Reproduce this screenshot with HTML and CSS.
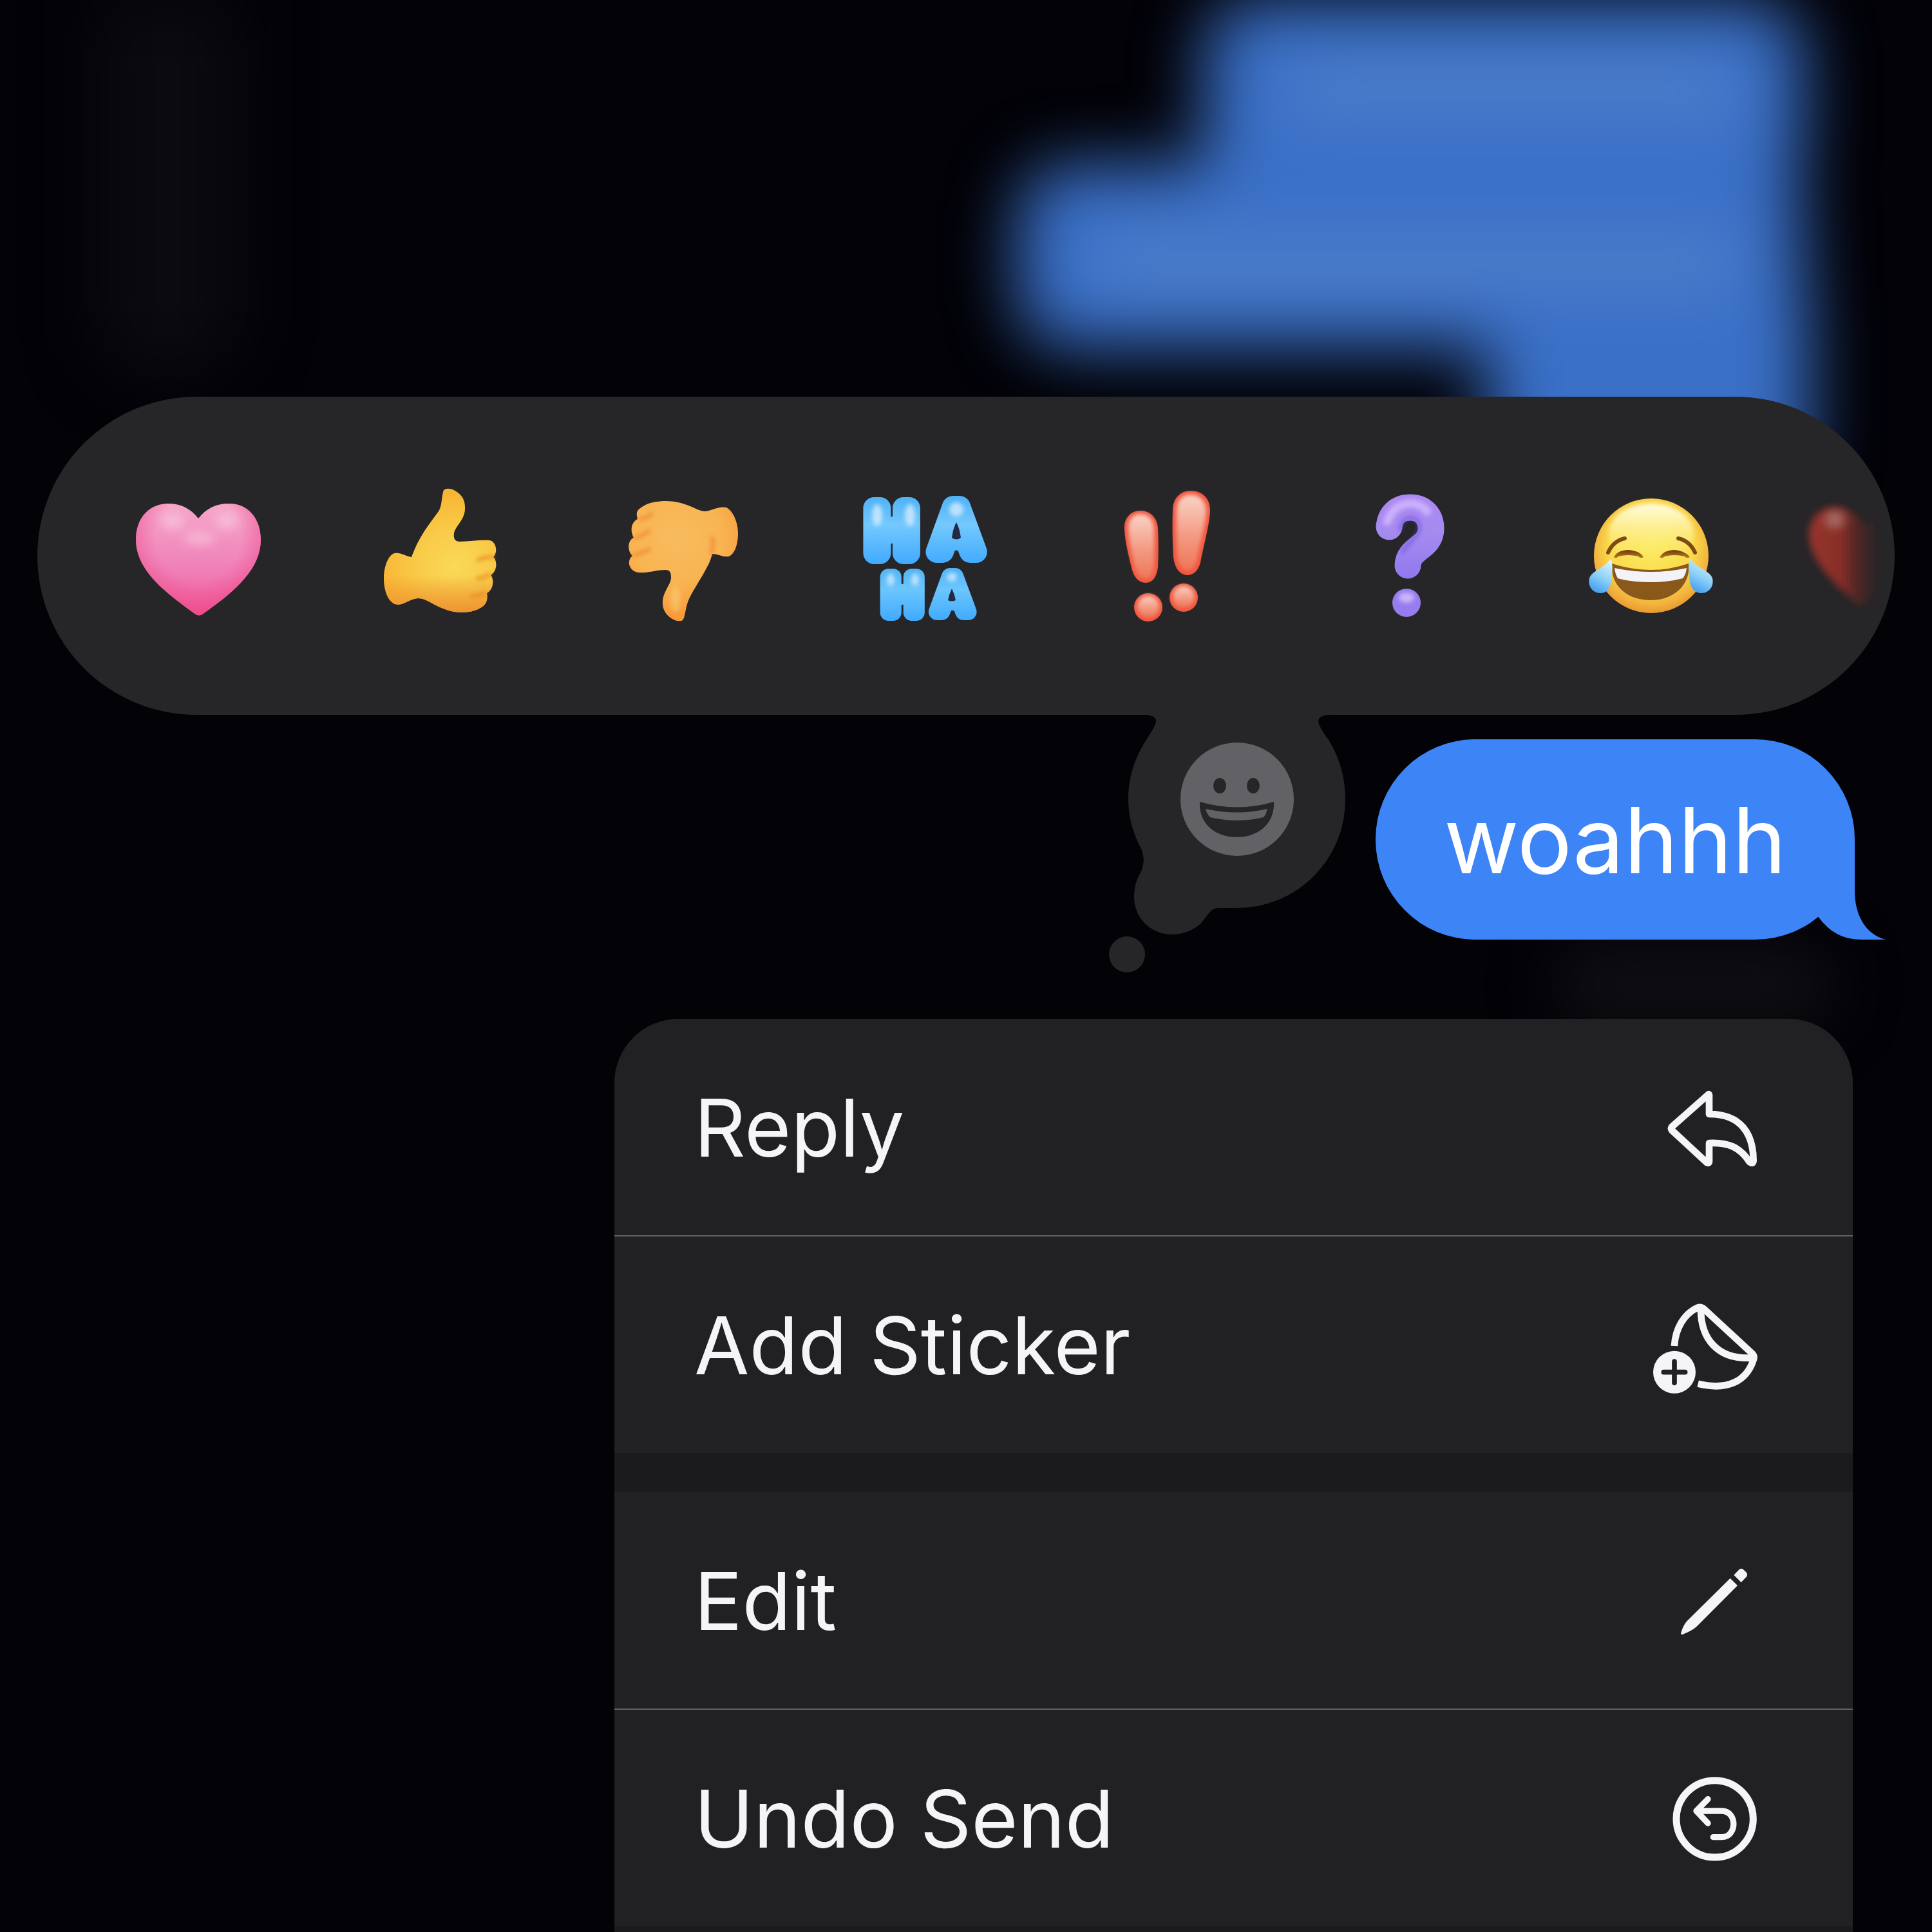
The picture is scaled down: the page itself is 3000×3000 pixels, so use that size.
FILE: index.html
```html
<!DOCTYPE html>
<html lang="en">
<head>
<meta charset="utf-8">
<meta name="viewport" content="width=device-width, initial-scale=1">
<title>Message actions</title>
<link rel="stylesheet" href="styles.css">
</head>
<body>
<main class="screen">
  <div class="backdrop" aria-hidden="true">
    <div class="ghost ghost-incoming"></div>
    <div class="ghost ghost-first"></div>
    <div class="ghost ghost-second"></div>
    <div class="ghost ghost-third"></div>
    <div class="ghost ghost-line-first"></div>
    <div class="ghost ghost-line-second"></div>
    <div class="ghost ghost-status"></div>
  </div>

  <section class="reactions" aria-label="Reactions">
    <div class="reaction-list">
      <button class="reaction" type="button" aria-label="Heart">
        <svg class="emoji" viewBox="186 738 240 250">
          <defs>
            <linearGradient id="heart-fill" x1="0" y1="0" x2="0" y2="1">
              <stop offset="0" stop-color="#f5a6cb"/><stop offset=".5" stop-color="#f086bb"/><stop offset="1" stop-color="#ef5f9f"/>
            </linearGradient>
            <radialGradient id="heart-edge" gradientUnits="userSpaceOnUse" cx="306" cy="835" r="120">
              <stop offset=".55" stop-color="#f04c8c" stop-opacity="0"/><stop offset="1" stop-color="#f04485" stop-opacity=".75"/>
            </radialGradient>
            <filter id="soft" x="-50%" y="-50%" width="200%" height="200%"><feGaussianBlur stdDeviation="8"/></filter>
            <filter id="softer" x="-50%" y="-50%" width="200%" height="200%"><feGaussianBlur stdDeviation="3"/></filter>
          </defs>
          <path fill="url(#heart-fill)" d="M306 805C294 790 280 782 259 782C229 782 209 805 209 838C209 882 248 916 299 952Q307 959 315 952C366 916 403 882 403 838C403 805 383 782 354 782C332 782 318 790 306 805Z"/>
          <path fill="url(#heart-edge)" d="M306 805C294 790 280 782 259 782C229 782 209 805 209 838C209 882 248 916 299 952Q307 959 315 952C366 916 403 882 403 838C403 805 383 782 354 782C332 782 318 790 306 805Z"/>
          <g fill="#fad3e3" opacity=".55" filter="url(#soft)"><ellipse cx="266" cy="809" rx="18" ry="13"/><ellipse cx="350" cy="809" rx="18" ry="13"/><ellipse cx="308" cy="836" rx="24" ry="10"/></g>
        </svg>
      </button>
      <button class="reaction" type="button" aria-label="Thumbs up">
        <svg class="emoji" viewBox="563 738 240 250">
          <defs>
            <radialGradient id="up-fill" gradientUnits="userSpaceOnUse" cx="705" cy="880" r="115">
              <stop offset="0" stop-color="#f9da58"/><stop offset=".5" stop-color="#f9cb48"/><stop offset="1" stop-color="#f8b535"/>
            </radialGradient>
            <linearGradient id="up-shade" x1="0" y1="0" x2="0" y2="1">
              <stop offset=".7" stop-color="#ee9431" stop-opacity="0"/><stop offset="1" stop-color="#ee9431"/>
            </linearGradient>
            <path id="up-shape" d="M688 761Q692 757 702 760C714 766 722 774 721 791C720 808 706 817 704 828C703 836 705 841 713 841C729 841 744 838 759 839C769 840 773 857 765 865C771 870 772 886 761 893C767 900 765 916 755 921C757 934 753 940 743 945C729 953 703 952 690 946C672 940 661 929 648 929C634 930 624 942 612 938C601 933 595 916 595 898C595 880 602 861 612 859C620 857 630 864 638 865C643 852 647 843 653 833C661 819 672 805 680 794C686 784 684 772 688 761Z"/>
          </defs>
          <use href="#up-shape" fill="url(#up-fill)"/>
          <use href="#up-shape" fill="url(#up-shade)"/>
          <path fill="none" stroke="#e98a24" stroke-width="5" stroke-linecap="round" opacity=".9" filter="url(#softer)" d="M741 870Q754 864 764 865M741 898Q752 897 759 892M731 926Q744 925 752 921"/>
        </svg>
      </button>
      <button class="reaction" type="button" aria-label="Thumbs down">
        <svg class="emoji" viewBox="941 738 240 250">
          <defs>
            <radialGradient id="down-fill" gradientUnits="userSpaceOnUse" cx="1052" cy="835" r="125">
              <stop offset="0" stop-color="#f7bc5f"/><stop offset=".55" stop-color="#f9b452"/><stop offset="1" stop-color="#f99838"/>
            </radialGradient>
            <path id="down-shape" d="M991 806C989 798 989 794 994 790C1010 776 1040 776 1058 781C1074 785 1087 794 1095 794C1104 794 1118 785 1129 788C1140 794 1147 812 1147 828C1147 845 1142 860 1133 864C1124 866 1114 859 1107 860C1103 874 1101 877 1096 886C1087 903 1074 921 1069 935C1064 949 1065 966 1057 964C1049 966 1030 955 1030 937C1029 920 1043 908 1043 897C1043 888 1041 885 1034 885C1020 885 1007 890 993 889C978 888 973 871 983 863C975 856 975 839 985 835C979 824 981 811 991 806Z"/>
          </defs>
          <use href="#down-shape" fill="url(#down-fill)"/>
          <path fill="none" stroke="#ee8730" stroke-width="5" stroke-linecap="round" opacity=".9" filter="url(#softer)" d="M996 806Q1007 804 1013 798M988 835Q1002 830 1009 825M986 862Q1000 858 1009 853M1106 858Q1110 845 1107 835"/>
          <ellipse cx="1050" cy="930" rx="8" ry="20" fill="#f8c76e" opacity=".7" filter="url(#softer)"/>
        </svg>
      </button>
      <button class="reaction" type="button" aria-label="Ha ha">
        <svg class="emoji haha" viewBox="1317 738 240 250">
          <defs>
            <linearGradient id="ha-top" gradientUnits="userSpaceOnUse" x1="0" y1="772" x2="0" y2="878">
              <stop offset="0" stop-color="#4fb2f6"/><stop offset=".4" stop-color="#74c8fd"/><stop offset="1" stop-color="#3fa9ff"/>
            </linearGradient>
            <linearGradient id="ha-low" gradientUnits="userSpaceOnUse" x1="0" y1="882" x2="0" y2="965">
              <stop offset="0" stop-color="#4fb2f6"/><stop offset=".4" stop-color="#6cc6fd"/><stop offset="1" stop-color="#3fa9ff"/>
            </linearGradient>
          </defs>
          <g fill="url(#ha-top)" stroke="url(#ha-top)" stroke-width="34">
            <text class="ha-large" x="1350" y="859">H</text><text class="ha-large" x="1453" y="857">A</text>
          </g>
          <g fill="url(#ha-low)" stroke="url(#ha-low)" stroke-width="26">
            <text class="ha-small" x="1374" y="951">H</text><text class="ha-small" x="1454" y="950">A</text>
          </g>
          <path fill="#232a45" d="M1486 811Q1491 820 1493 835Q1486 840 1479 835Q1481 820 1486 811ZM1479 914Q1483 922 1485 932Q1479 935 1473 932Q1475 922 1479 914Z"/>
          <g fill="#d9eeff" opacity=".75" filter="url(#softer)"><ellipse cx="1363" cy="800" rx="8" ry="17"/><ellipse cx="1414" cy="800" rx="8" ry="17"/><ellipse cx="1486" cy="791" rx="11" ry="11"/><ellipse cx="1384" cy="900" rx="6" ry="10"/><ellipse cx="1422" cy="900" rx="6" ry="10"/><ellipse cx="1479" cy="896" rx="8" ry="7"/></g>
        </svg>
      </button>
      <button class="reaction" type="button" aria-label="Emphasize">
        <svg class="emoji" viewBox="1692 738 240 250">
          <defs>
            <linearGradient id="bang-fill" x1="0" y1="0" x2="0" y2="1">
              <stop offset="0" stop-color="#f9d3c5"/><stop offset=".55" stop-color="#f39a83"/><stop offset="1" stop-color="#ef7557"/>
            </linearGradient>
            <filter id="bang-blur" x="-20%" y="-20%" width="140%" height="140%"><feGaussianBlur stdDeviation="3"/></filter>
            <g id="bang-marks">
              <path d="M1771 793C1756 793 1745 804 1746 822C1747 842 1753 865 1757 881C1760 896 1768 905 1779 905C1790 905 1796 896 1798 881C1799 861 1799 842 1798 820C1797 804 1786 793 1771 793Z"/>
              <path d="M1849 762C1832 762 1821 775 1821 792C1820 820 1821 845 1822 865C1824 882 1832 893 1844 893C1855 893 1863 883 1865 868C1870 844 1877 818 1879 796C1881 776 1868 762 1849 762Z"/>
              <circle cx="1783" cy="943" r="22"/><circle cx="1838" cy="928" r="22"/>
            </g>
          </defs>
          <use href="#bang-marks" fill="#f0553d"/>
          <g fill="url(#bang-fill)" filter="url(#bang-blur)">
            <path d="M1771 798C1758 798 1751 808 1752 822C1753 842 1758 865 1762 881C1765 893 1771 899 1779 899C1787 899 1791 893 1792 881C1793 861 1793 842 1792 820C1791 806 1783 798 1771 798Z"/>
            <path d="M1849 768C1835 768 1827 778 1827 792C1826 820 1827 845 1828 865C1830 879 1836 886 1844 886C1852 886 1857 879 1859 868C1864 844 1871 818 1873 796C1874 780 1864 768 1849 768Z"/>
            <circle cx="1783" cy="942" r="17"/><circle cx="1838" cy="927" r="17"/>
          </g>
        </svg>
      </button>
      <button class="reaction" type="button" aria-label="Question">
        <svg class="emoji" viewBox="2071 738 240 250">
          <defs>
            <linearGradient id="ask-fill" gradientUnits="userSpaceOnUse" x1="0" y1="768" x2="0" y2="900">
              <stop offset="0" stop-color="#ad88f3"/><stop offset=".45" stop-color="#a58bef"/><stop offset="1" stop-color="#9077ef"/>
            </linearGradient>
          </defs>
          <path fill="none" stroke="url(#ask-fill)" stroke-width="41" stroke-linecap="round" d="M2160 818C2162 799 2174 788 2193 788C2213 788 2225 802 2225 821C2225 851 2190 850 2189 878"/>
          <path fill="none" stroke="#6244d8" stroke-width="6" stroke-linecap="round" opacity=".5" filter="url(#softer)" d="M2177 822C2180 811 2184 804 2193 804C2203 804 2207 811 2207 819C2207 830 2190 843 2181 856"/>
          <path fill="none" stroke="#d4bdff" stroke-width="13" stroke-linecap="round" opacity=".75" filter="url(#softer)" d="M2157 810C2164 792 2176 782 2193 782Q2210 782 2219 794"/>
          <circle cx="2187" cy="936" r="22" fill="#967cee"/>
          <ellipse cx="2187" cy="928" rx="12" ry="8" fill="#cbb4fc" filter="url(#softer)"/>
        </svg>
      </button>
      <button class="reaction" type="button" aria-label="Tears of joy">
        <svg class="emoji" viewBox="2446 738 240 250">
          <defs>
            <radialGradient id="joy-fill" gradientUnits="userSpaceOnUse" cx="2566" cy="848" r="108">
              <stop offset="0" stop-color="#fbe85a"/><stop offset=".6" stop-color="#fadb4d"/><stop offset=".85" stop-color="#f2b03c"/><stop offset="1" stop-color="#e5912c"/>
            </radialGradient>
            <linearGradient id="joy-shine" x1="0" y1="0" x2="0" y2="1">
              <stop offset="0" stop-color="#fffde5"/><stop offset="1" stop-color="#fff37c" stop-opacity="0"/>
            </linearGradient>
            <linearGradient id="tear" x1=".7" y1="0" x2=".3" y2="1">
              <stop offset="0" stop-color="#d9f3fb"/><stop offset=".5" stop-color="#8fd2f8"/><stop offset="1" stop-color="#3f9cf0"/>
            </linearGradient>
            <linearGradient id="eye" x1="0" y1="0" x2="0" y2="1"><stop offset="0" stop-color="#6a3b0c"/><stop offset="1" stop-color="#b87a22"/></linearGradient>
          </defs>
          <circle cx="2566" cy="863" r="89" fill="url(#joy-fill)"/>
          <ellipse cx="2566" cy="828" rx="66" ry="46" fill="url(#joy-shine)" filter="url(#softer)"/>
          <path fill="none" stroke="#7d4b13" stroke-width="6" stroke-linecap="round" d="M2499 858Q2507 840 2525 836M2608 836Q2626 840 2634 858"/>
          <path fill="url(#eye)" d="M2508 865Q2514 854 2531 854Q2548 855 2554 865Q2550 868 2546 864Q2531 860 2515 864Q2511 868 2508 865ZM2579 865Q2586 854 2602 854Q2618 855 2626 865Q2621 868 2618 864Q2602 860 2587 864Q2583 868 2579 865Z"/>
          <path fill="#8b581c" d="M2505 875Q2535 885 2565 885Q2595 885 2624 875C2628 905 2604 932 2565 932C2527 932 2502 907 2505 875Z"/>
          <path fill="#f3f2f6" d="M2509 882Q2536 888 2565 888Q2594 888 2621 882Q2620 892 2615 898Q2593 904 2565 904Q2536 904 2514 898Q2510 891 2509 882Z"/>
          <path fill="url(#tear)" d="M2503 868Q2507 873 2505 895C2504 911 2499 921 2487 921C2475 921 2467 910 2470 898C2473 887 2491 883 2503 868Z"/>
          <path fill="url(#tear)" d="M2627 868Q2623 873 2625 895C2626 911 2632 921 2644 921C2656 921 2664 910 2661 898C2658 887 2639 883 2627 868Z"/>
        </svg>
      </button>
      <button class="reaction" type="button" aria-label="Red heart">
        <svg class="emoji" viewBox="2821 738 240 250">
          <defs>
            <linearGradient id="red-fade" gradientUnits="userSpaceOnUse" x1="2805" y1="0" x2="2916" y2="0">
              <stop offset="0" stop-color="#99362c"/><stop offset=".5" stop-color="#872d26"/><stop offset=".75" stop-color="#702822" stop-opacity=".5"/><stop offset="1" stop-color="#702822" stop-opacity="0"/>
            </linearGradient>
            <filter id="red-blur" x="-20%" y="-20%" width="140%" height="140%"><feGaussianBlur stdDeviation="6"/></filter>
          </defs>
          <path fill="url(#red-fade)" filter="url(#red-blur)" d="M2893 812C2882 795 2868 788 2850 788C2825 788 2810 806 2810 832C2812 872 2850 908 2890 942L2935 900V812Z"/>
          <ellipse cx="2850" cy="807" rx="15" ry="13" fill="#b58a86" opacity=".7" filter="url(#soft)"/>
        </svg>
      </button>
    </div>
    <button class="emoji-picker" type="button" aria-label="More emoji">
      <svg viewBox="1700 1090 440 440">
        <path fill="#262528" d="M1770 1090V1110H1777C1791 1110 1798 1116 1794 1124C1791 1132 1786 1139 1780 1149C1762 1176 1752 1208 1752 1241C1752 1270 1760 1295 1772 1318C1778 1332 1777 1345 1768 1361C1763 1370 1761 1382 1761 1393A58 58 0 0 0 1819 1451C1840 1451 1857 1443 1868 1430C1877 1419 1880 1410 1893 1410H1921A168 168 0 0 0 2089 1241C2089 1207 2080 1176 2063 1149C2057 1140 2051 1132 2048 1124C2045 1116 2051 1110 2065 1110H2072V1090Z"/>
        <circle cx="1750" cy="1482" r="28" fill="#262528"/>
        <circle cx="1921" cy="1241" r="88" fill="#626166"/>
        <g fill="#262528"><ellipse cx="1894" cy="1220" rx="10" ry="12"/><ellipse cx="1946" cy="1220" rx="10" ry="12"/>
        <path d="M1863 1245Q1921 1262 1978 1245C1980 1280 1952 1300 1921 1300C1888 1300 1861 1280 1863 1245Z"/></g>
        <path fill="#626166" d="M1872 1256Q1921 1267 1968 1256Q1966 1265 1962 1269Q1921 1279 1879 1269Q1874 1264 1872 1256Z"/>
      </svg>
    </button>
  </section>

  <div class="message-row">
    <p class="bubble">woahhh
      <svg class="bubble-tail" viewBox="0 0 203 155" aria-hidden="true"><path fill="#3d84f7" d="M155 0V79C155 117 172 147 203 155H166C138 155 116 144 98 119L60 60L100 0Z"/></svg>
    </p>
  </div>

  <nav class="menu" aria-label="Message actions">
    <div class="menu-group">
      <button class="menu-item" type="button"><span>Reply</span>
        <svg class="icon" viewBox="69 -30 600 600"><path fill="none" stroke="#f5f5f7" stroke-width="32" stroke-linejoin="round" d="M340 114L168 266Q162 274 168 282L332 434Q342 438 342 426V342C430 338 485 360 530 430Q546 442 548 424C548 300 490 206 342 207V118Z"/></svg>
      </button>
      <button class="menu-item" type="button"><span>Add Sticker</span>
        <svg class="icon" viewBox="69 -33 600 600">
          <g fill="none" stroke="#f5f5f7" stroke-width="32" stroke-linejoin="round"><path d="M180 270C184 190 225 120 287 92Q303 86 317 97L542 305Q556 318 547 338C515 432 430 480 290 446"/><path d="M303 95C302 230 375 338 548 325"/></g>
          <circle cx="180" cy="392" r="99" fill="#f5f5f7"/><path stroke="#212123" stroke-width="23" stroke-linecap="round" d="M180 342V442M130 392H230"/>
        </svg>
      </button>
    </div>
    <div class="menu-group">
      <button class="menu-item" type="button"><span>Edit</span>
        <svg class="icon" viewBox="69 -42 600 600"><path fill="#f5f5f7" d="M440 152L474 186L285 376Q265 396 216 415Q208 413 211 405Q222 368 240 350ZM457 137L483 110Q492 105 500 110L517 127Q522 136 517 144L491 171Z"/></svg>
      </button>
      <button class="menu-item" type="button"><span>Undo Send</span>
        <svg class="icon" viewBox="69 972 600 600"><g fill="none" stroke="#f5f5f7" stroke-linecap="round" stroke-linejoin="round"><circle cx="368" cy="1273" r="179" stroke-width="33"/><path stroke-width="28" d="M336 1181L282 1236L336 1293M284 1236H400C474 1236 474 1358 400 1358H361"/></g></svg>
      </button>
    </div>
  </nav>
</main>
</body>
</html>
```

FILE: styles.css
```css
* {
  box-sizing: border-box;
}

body {
  margin: 0;
  background: #020207;
  color: #f5f5f7;
  font-family: Inter, "Liberation Sans", sans-serif;
}

button {
  margin: 0;
  padding: 0;
  border: 0;
  background: none;
  color: inherit;
  font: inherit;
  cursor: pointer;
}

.screen {
  position: relative;
  display: flex;
  flex-direction: column;
  min-height: 100vh;
  padding-top: 616px;
  overflow: hidden;
}

/* Blurred conversation behind the overlay */
.backdrop {
  position: absolute;
  inset: 0;
  overflow: hidden;
  filter: blur(52px);
}

.ghost {
  position: absolute;
  border-radius: 80px;
  background: #3a70c8;
}

.ghost-first {
  top: 0;
  right: 200px;
  width: 930px;
  height: 310px;
}

.ghost-second {
  top: 256px;
  right: 200px;
  width: 1220px;
  height: 284px;
}

.ghost-third {
  top: 400px;
  right: 190px;
  width: 500px;
  height: 380px;
}

.ghost-line-first,
.ghost-line-second {
  right: 300px;
  height: 60px;
  background: #5684c8;
}

.ghost-line-first {
  top: 110px;
  width: 700px;
}

.ghost-line-second {
  top: 376px;
  width: 1000px;
}

.ghost-incoming {
  top: -100px;
  left: 150px;
  width: 220px;
  height: 680px;
  background: #0a0a0f;
}

.ghost-status {
  top: 1490px;
  right: 160px;
  width: 420px;
  height: 80px;
  background: #16161b;
}

/* Reaction bar */
.reactions {
  position: relative;
  margin: 0 58px;
}

.reaction-list {
  display: flex;
  padding: 122px 0 122px 62px;
  border-radius: 247px;
  background: #262528;
  overflow: hidden;
}

.reaction {
  flex: 0 0 376px;
  display: flex;
  justify-content: center;
}

.emoji {
  width: 240px;
  height: 250px;
  overflow: visible;
}

.haha {
  font-family: Inter, sans-serif;
  stroke-linejoin: round;
}

.ha-large {
  font-size: 96px;
}

.ha-small {
  font-size: 76px;
}

.emoji-picker {
  position: absolute;
  top: 474px;
  right: 802px;
  width: 440px;
  height: 440px;
}

.emoji-picker svg {
  display: block;
}

/* Selected message */
.message-row {
  display: flex;
  justify-content: flex-end;
  padding: 38px 120px 0 0;
}

.bubble {
  position: relative;
  margin: 0;
  padding: 68px 106px 67px;
  border-radius: 155px;
  background: #3d84f7;
  color: #fff;
  font-size: 142px;
  line-height: 176px;
}

.bubble-tail {
  position: absolute;
  right: -48px;
  bottom: 0;
  width: 203px;
  height: 155px;
}

/* Context menu */
.menu {
  position: relative;
  flex: 1;
  display: flex;
  flex-direction: column;
  gap: 61px;
  margin: 123px 123px 0 954px;
  border-radius: 100px 100px 0 0;
  background: #1b1b1d;
  overflow: hidden;
}

.menu-group {
  background: #212123;
}

.menu-item {
  display: flex;
  align-items: center;
  justify-content: space-between;
  width: 100%;
  height: 336px;
  padding: 2px 114px 0 124px;
  font-size: 124px;
  line-height: 160px;
  text-align: left;
}

.menu-item + .menu-item {
  height: 338px;
  border-top: 2px solid #5f5f62;
}

.icon {
  width: 200px;
  height: 200px;
}
```
